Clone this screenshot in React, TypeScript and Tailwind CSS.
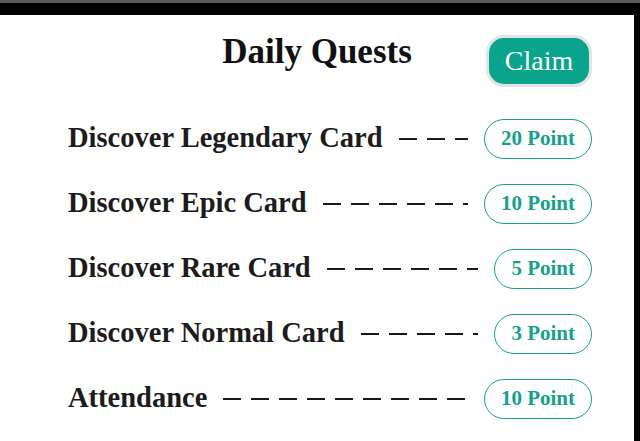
import React from "react"

interface Quest {
  label: string
  points: number
}

const QUESTS: Quest[] = [
  { label: "Discover Legendary Card", points: 20 },
  { label: "Discover Epic Card", points: 10 },
  { label: "Discover Rare Card", points: 5 },
  { label: "Discover Normal Card", points: 3 },
  { label: "Attendance", points: 10 },
]

const SERIF = "font-['Liberation_Serif',serif]"

function Dashes() {
  // dashed leader that fills the gap and gets clipped at the end
  return (
    <div className="flex-1 mx-4 overflow-hidden flex items-center gap-[10px] h-[4px]">
      {Array.from({ length: 20 }).map((_, i) => (
        <div key={i} className="shrink-0 w-[18px] h-[2px] bg-[#1a1a1a]" />
      ))}
    </div>
  )
}

export default function App() {
  return (
    <div className="w-[640px] h-[441px] bg-black border-t-[3px] border-[#5a5a5a] pt-[12px] pr-[6px] overflow-hidden">
      <div className={`h-full bg-white pt-[20px] ${SERIF}`}>
        {/* Header */}
        <div className="grid grid-cols-[1fr_auto_1fr] h-[52px]">
          <div />
          <h1 className="text-[35px] leading-[34px] font-bold text-[#111]">Daily Quests</h1>
          <div className="flex justify-end pr-[42px]">
            <button className="h-[52px] w-[106px] rounded-[18px] bg-[#0aa38c] border-[3px] border-[#e3e4e8] text-white text-[28px] leading-none">
              Claim
            </button>
          </div>
        </div>

        {/* Quests */}
        <div className="mt-[19px] flex flex-col pl-[68px] pr-[42px]">
          {QUESTS.map((q) => (
            <div key={q.label} className="h-[65px] flex items-center">
              <span className="text-[28.5px] font-bold text-[#1c1c1c] whitespace-nowrap">
                {q.label}
              </span>
              <Dashes />
              <span className="shrink-0 h-[40px] px-[16px] rounded-full border-[1.5px] border-[#14a18d] text-[#14a18d] text-[21px] font-bold flex items-center">
                {q.points} Point
              </span>
            </div>
          ))}
        </div>
      </div>
    </div>
  )
}
